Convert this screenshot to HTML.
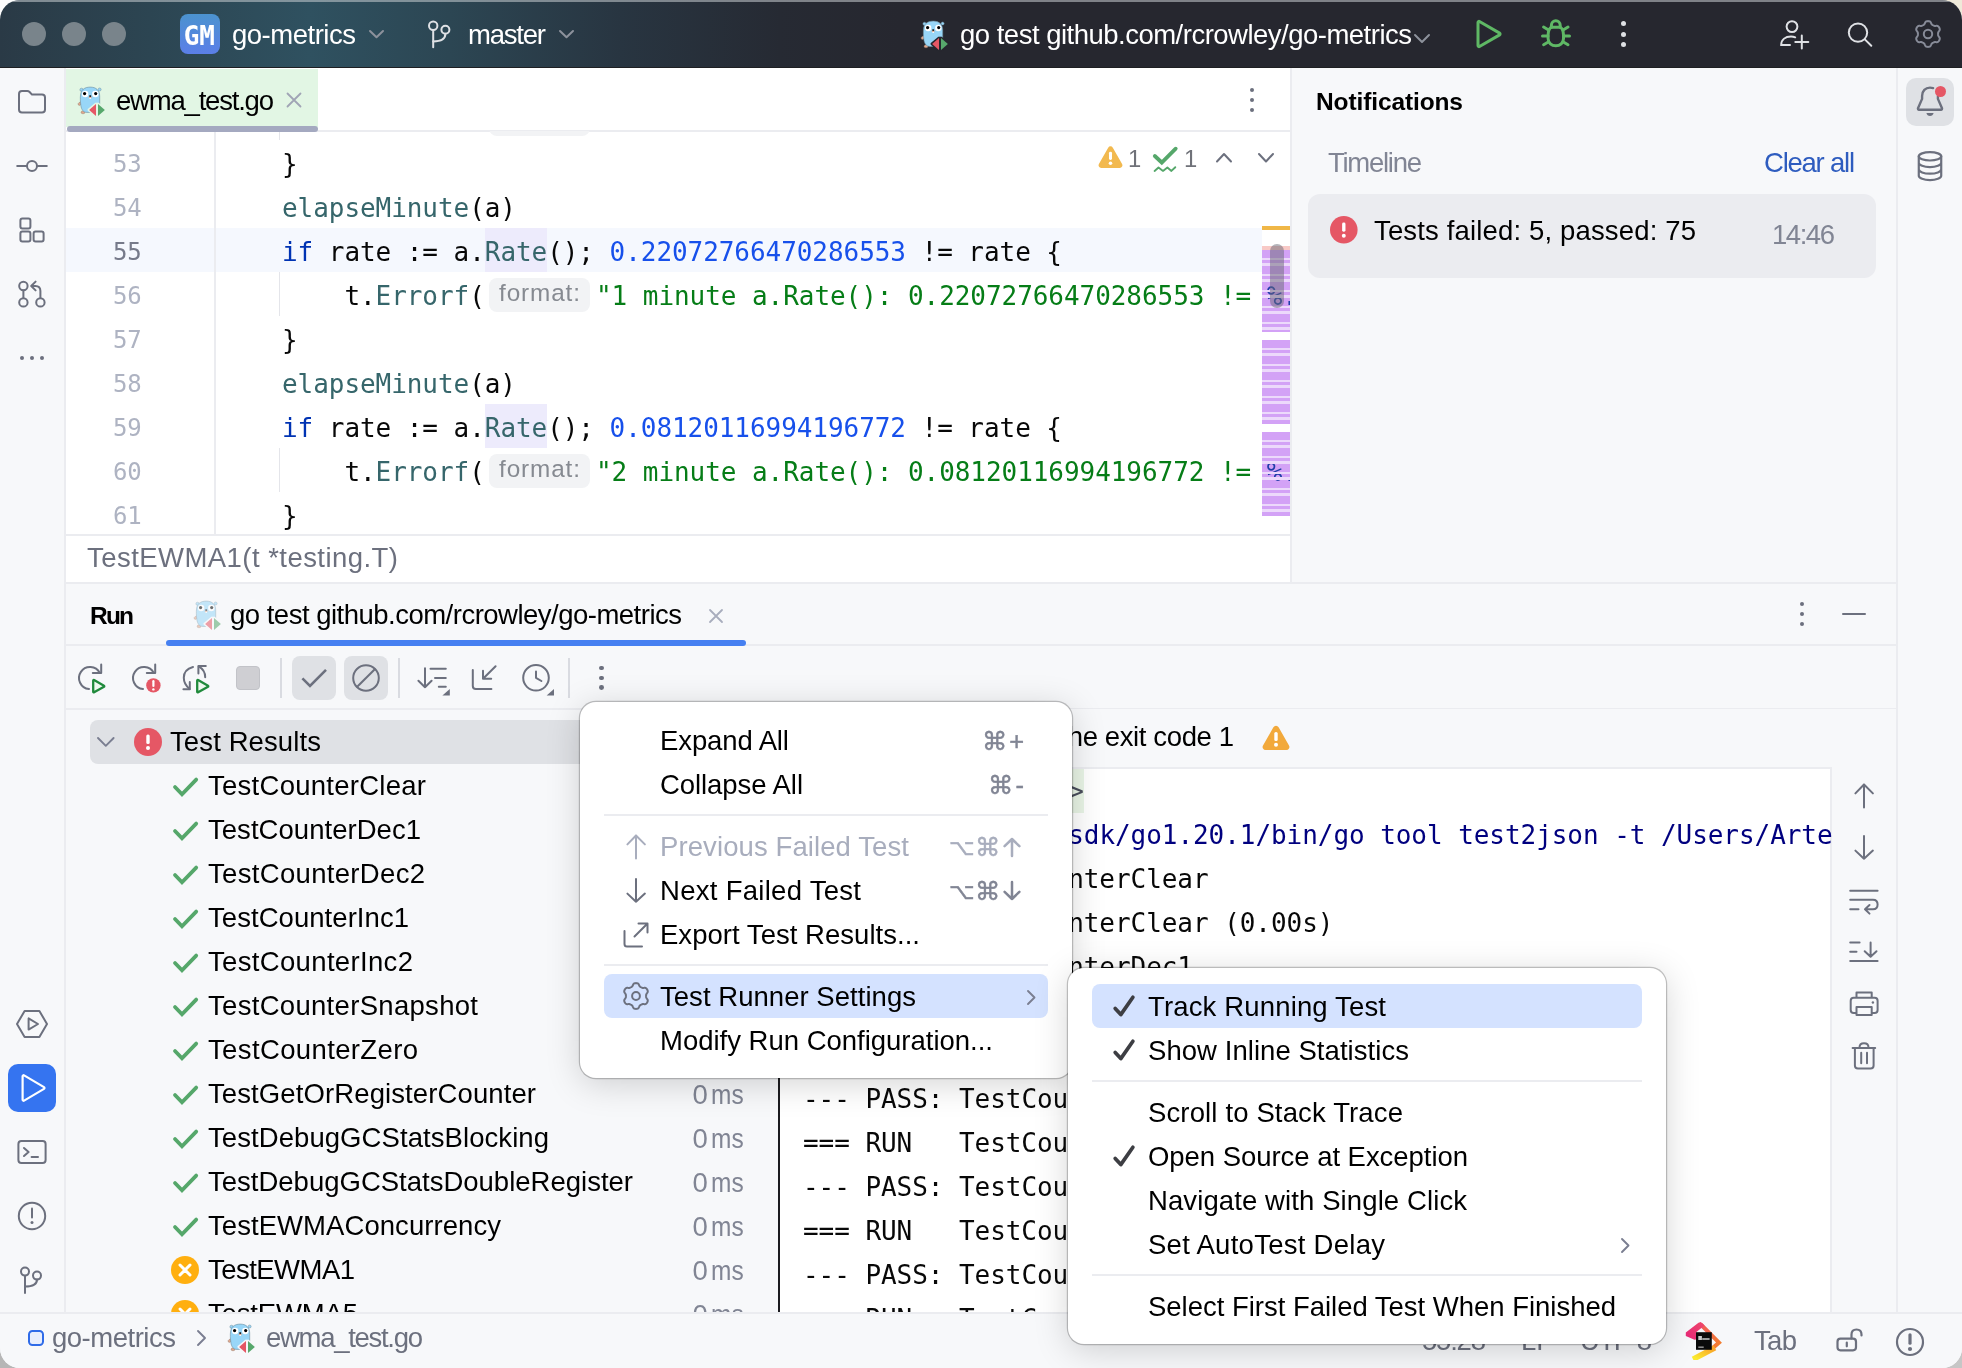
<!DOCTYPE html>
<html lang="en"><head><meta charset="utf-8"><title>go-metrics – ewma_test.go</title>
<style>
html,body{margin:0;padding:0;}
body{width:1962px;height:1368px;overflow:hidden;background:#f2f2f2;position:relative;}
#win{will-change:transform;position:absolute;left:0;top:0;width:1962px;height:1368px;border-radius:20px;overflow:hidden;background:#f7f8fa;}
.b{position:absolute;display:block;}
.t{position:absolute;white-space:pre;display:block;}
.s{font-family:"Liberation Sans","DejaVu Sans",sans-serif;}
.m{font-family:"DejaVu Sans Mono","Liberation Mono",monospace;}

</style></head>
<body>
<div class="b" style="left:0;top:0;width:30px;height:30px;background:#fdfdfd"></div>
<div class="b" style="right:0;top:0;width:30px;height:30px;background:#efe9d9"></div>
<div class="b" style="left:0;bottom:0;width:30px;height:30px;background:#b6b6b6"></div>
<div class="b" style="right:0;bottom:0;width:30px;height:30px;background:#c6c6c6"></div>
<div id="win">
<div class="b" style="left:0px;top:0px;width:1962px;height:67px;background:linear-gradient(90deg,#2a3a46 0px,#2c4552 150px,#2f5160 310px,#2c4653 450px,#283541 620px,#262a33 780px,#26272f 900px,#26272f 1962px);"></div>
<div class="b" style="left:0px;top:67px;width:1962px;height:1px;background:#1e1f22;"></div>
<div class="b" style="left:0px;top:0px;width:1962px;height:1.5px;background:rgba(200,205,210,.55);"></div>
<div class="b" style="left:22px;top:22px;width:24px;height:24px;background:#79848b;border-radius:50%;"></div>
<div class="b" style="left:62px;top:22px;width:24px;height:24px;background:#79848b;border-radius:50%;"></div>
<div class="b" style="left:102px;top:22px;width:24px;height:24px;background:#79848b;border-radius:50%;"></div>
<div class="b" style="left:180px;top:14px;width:40px;height:40px;background:linear-gradient(180deg,#4b93cf,#5b7fe8);border-radius:8px;"></div>
<span class="t m" style="left:183.7px;top:15.5px;height:40px;line-height:40px;font-size:26px;color:#fff;font-weight:700;">GM</span>
<span class="t s" style="left:232px;top:12.5px;height:44px;line-height:44px;font-size:27.5px;color:#fff;letter-spacing:-0.484px;">go-metrics</span>
<span class="t s" style="left:468px;top:12.5px;height:44px;line-height:44px;font-size:27.5px;color:#fff;letter-spacing:-1.209px;">master</span>
<span class="t s" style="left:960px;top:12.5px;height:44px;line-height:44px;font-size:27.5px;color:#fff;letter-spacing:-0.506px;">go test github.com/rcrowley/go-metrics</span>
<div class="b" style="left:0px;top:68px;width:64px;height:1246px;background:#f7f8fa;"></div>
<div class="b" style="left:64px;top:68px;width:2px;height:1246px;background:#ebecf0;"></div>
<div class="b" style="left:1898px;top:68px;width:64px;height:1246px;background:#f7f8fa;"></div>
<div class="b" style="left:1896px;top:68px;width:2px;height:1246px;background:#ebecf0;"></div>
<div class="b" style="left:1906px;top:78px;width:48px;height:48px;background:#dfe1e5;border-radius:10px;"></div>
<div class="b" style="left:66px;top:68px;width:1224px;height:62px;background:#fff;"></div>
<div class="b" style="left:66px;top:130px;width:1224px;height:2px;background:#ebecf0;"></div>
<div class="b" style="left:66px;top:69px;width:252px;height:58px;background:#e2f6e4;"></div>
<span class="t s" style="left:116px;top:78.5px;height:44px;line-height:44px;font-size:27.5px;color:#000;letter-spacing:-1.202px;">ewma_test.go</span>
<div class="b" style="left:66px;top:132px;width:1224px;height:402px;background:#fff;"></div>
<div class="b" style="left:67px;top:126px;width:251px;height:5.5px;background:#a4a9c0;border-radius:3px;"></div>
<div class="b" style="left:66px;top:228px;width:1196px;height:44px;background:#f5f8fe;"></div>
<div class="b" style="left:214px;top:132px;width:1.5px;height:402px;background:#ebecf0;"></div>
<div class="b" style="left:278.5px;top:272px;width:1.3px;height:44px;background:#e4e5ea;"></div>
<div class="b" style="left:278.5px;top:132px;width:1.3px;height:8px;background:#e4e5ea;"></div>
<div class="b" style="left:278.5px;top:448px;width:1.3px;height:44px;background:#e4e5ea;"></div>
<div class="b" style="left:489px;top:116px;width:101px;height:20px;background:#f2f3f5;border-radius:8px;clip-path:inset(15px 0 0 0);"></div>
<div class="b" style="left:485px;top:228px;width:62px;height:44px;background:#edebfc;"></div>
<div class="b" style="left:485px;top:404px;width:62px;height:44px;background:#edebfc;"></div>
<span class="t m" style="left:113px;top:141.5px;height:44px;line-height:44px;font-size:24px;color:#aeb3c2;letter-spacing:-0.106px;">53</span>
<span class="t m" style="left:113px;top:185.5px;height:44px;line-height:44px;font-size:24px;color:#aeb3c2;letter-spacing:-0.106px;">54</span>
<span class="t m" style="left:113px;top:229.5px;height:44px;line-height:44px;font-size:24px;color:#767a8a;letter-spacing:-0.106px;">55</span>
<span class="t m" style="left:113px;top:273.5px;height:44px;line-height:44px;font-size:24px;color:#aeb3c2;letter-spacing:-0.106px;">56</span>
<span class="t m" style="left:113px;top:317.5px;height:44px;line-height:44px;font-size:24px;color:#aeb3c2;letter-spacing:-0.106px;">57</span>
<span class="t m" style="left:113px;top:361.5px;height:44px;line-height:44px;font-size:24px;color:#aeb3c2;letter-spacing:-0.106px;">58</span>
<span class="t m" style="left:113px;top:405.5px;height:44px;line-height:44px;font-size:24px;color:#aeb3c2;letter-spacing:-0.106px;">59</span>
<span class="t m" style="left:113px;top:449.5px;height:44px;line-height:44px;font-size:24px;color:#aeb3c2;letter-spacing:-0.106px;">60</span>
<span class="t m" style="left:113px;top:493.5px;height:44px;line-height:44px;font-size:24px;color:#aeb3c2;letter-spacing:-0.106px;">61</span>
<span class="t m" style="left:282px;top:142px;height:44px;line-height:44px;font-size:26px;color:#080808;">}</span>
<span class="t m" style="left:282px;top:186px;height:44px;line-height:44px;font-size:26px;color:#36666b;letter-spacing:-0.059px;">elapseMinute</span>
<span class="t m" style="left:469.2px;top:186px;height:44px;line-height:44px;font-size:26px;color:#080808;letter-spacing:-0.084px;">(a)</span>
<span class="t m" style="left:282px;top:230px;height:44px;line-height:44px;font-size:26px;color:#0033b3;letter-spacing:-0.113px;">if</span>
<span class="t m" style="left:313.2px;top:230px;height:44px;line-height:44px;font-size:26px;color:#080808;letter-spacing:-0.059px;"> rate := a.</span>
<span class="t m" style="left:484.79999999999995px;top:230px;height:44px;line-height:44px;font-size:26px;color:#36666b;letter-spacing:-0.075px;">Rate</span>
<span class="t m" style="left:547.1999999999999px;top:230px;height:44px;line-height:44px;font-size:26px;color:#080808;letter-spacing:-0.075px;">(); </span>
<span class="t m" style="left:609.5999999999999px;top:230px;height:44px;line-height:44px;font-size:26px;color:#1750eb;letter-spacing:-0.057px;">0.22072766470286553</span>
<span class="t m" style="left:905.9999999999999px;top:230px;height:44px;line-height:44px;font-size:26px;color:#080808;letter-spacing:-0.061px;"> != rate {</span>
<span class="t m" style="left:344.4px;top:274px;height:44px;line-height:44px;font-size:26px;color:#080808;letter-spacing:-0.113px;">t.</span>
<span class="t m" style="left:375.59999999999997px;top:274px;height:44px;line-height:44px;font-size:26px;color:#36666b;letter-spacing:-0.064px;">Errorf</span>
<span class="t m" style="left:469.19999999999993px;top:274px;height:44px;line-height:44px;font-size:26px;color:#080808;">(</span>
<span class="t m" style="left:282px;top:318px;height:44px;line-height:44px;font-size:26px;color:#080808;">}</span>
<span class="t m" style="left:282px;top:362px;height:44px;line-height:44px;font-size:26px;color:#36666b;letter-spacing:-0.059px;">elapseMinute</span>
<span class="t m" style="left:469.2px;top:362px;height:44px;line-height:44px;font-size:26px;color:#080808;letter-spacing:-0.084px;">(a)</span>
<span class="t m" style="left:282px;top:406px;height:44px;line-height:44px;font-size:26px;color:#0033b3;letter-spacing:-0.113px;">if</span>
<span class="t m" style="left:313.2px;top:406px;height:44px;line-height:44px;font-size:26px;color:#080808;letter-spacing:-0.059px;"> rate := a.</span>
<span class="t m" style="left:484.79999999999995px;top:406px;height:44px;line-height:44px;font-size:26px;color:#36666b;letter-spacing:-0.075px;">Rate</span>
<span class="t m" style="left:547.1999999999999px;top:406px;height:44px;line-height:44px;font-size:26px;color:#080808;letter-spacing:-0.075px;">(); </span>
<span class="t m" style="left:609.5999999999999px;top:406px;height:44px;line-height:44px;font-size:26px;color:#1750eb;letter-spacing:-0.057px;">0.08120116994196772</span>
<span class="t m" style="left:905.9999999999999px;top:406px;height:44px;line-height:44px;font-size:26px;color:#080808;letter-spacing:-0.061px;"> != rate {</span>
<span class="t m" style="left:344.4px;top:450px;height:44px;line-height:44px;font-size:26px;color:#080808;letter-spacing:-0.113px;">t.</span>
<span class="t m" style="left:375.59999999999997px;top:450px;height:44px;line-height:44px;font-size:26px;color:#36666b;letter-spacing:-0.064px;">Errorf</span>
<span class="t m" style="left:469.19999999999993px;top:450px;height:44px;line-height:44px;font-size:26px;color:#080808;">(</span>
<span class="t m" style="left:282px;top:494px;height:44px;line-height:44px;font-size:26px;color:#080808;">}</span>
<div class="b" style="left:1262px;top:132px;width:28px;height:402px;background:#fff;"></div>
<div class="b" style="left:1262px;top:226px;width:28px;height:4px;background:#f0b747;"></div>
<div class="b" style="left:1262px;top:246px;width:28px;height:4px;background:#f8c9c6;"></div>
<div class="b" style="left:1262px;top:250px;width:28px;height:82px;background:#d3a2f6;"></div>
<div class="b" style="left:1262px;top:340px;width:28px;height:84px;background:#d3a2f6;"></div>
<div class="b" style="left:1262px;top:432px;width:28px;height:84px;background:#d3a2f6;"></div>
<div class="b" style="left:489px;top:278px;width:101px;height:34px;background:#f2f3f5;border-radius:8px;"></div>
<span class="t s" style="left:499px;top:275.5px;height:34px;line-height:34px;font-size:24.3px;color:#868a91;letter-spacing:0.898px;">format:</span>
<span class="t m" style="left:596px;top:274px;height:44px;line-height:44px;font-size:26px;color:#067d17;letter-spacing:-0.055px;">&quot;1 minute a.Rate(): 0.22072766470286553 != </span>
<div class="b" style="left:1262px;top:272px;width:28px;height:44px;overflow:hidden"><span class="t m" style="left:4.7999999999999545px;top:2px;height:44px;line-height:44px;font-size:26px;color:#1f3ea8;letter-spacing:-0.113px;">%.</span></div>
<div class="b" style="left:489px;top:454px;width:101px;height:34px;background:#f2f3f5;border-radius:8px;"></div>
<span class="t s" style="left:499px;top:451.5px;height:34px;line-height:34px;font-size:24.3px;color:#868a91;letter-spacing:0.898px;">format:</span>
<span class="t m" style="left:596px;top:450px;height:44px;line-height:44px;font-size:26px;color:#067d17;letter-spacing:-0.055px;">&quot;2 minute a.Rate(): 0.08120116994196772 != </span>
<div class="b" style="left:1262px;top:448px;width:28px;height:44px;overflow:hidden"><span class="t m" style="left:4.7999999999999545px;top:2px;height:44px;line-height:44px;font-size:26px;color:#1f3ea8;letter-spacing:-0.113px;">%.</span></div>
<div class="b" style="left:1262px;top:250px;width:28px;height:82px;background:repeating-linear-gradient(180deg,transparent 0px,transparent 8px,#ecd9fb 8px,#ecd9fb 10px,transparent 10px,transparent 13.5px,#ecd9fb 13.5px,#ecd9fb 16px);"></div>
<div class="b" style="left:1262px;top:340px;width:28px;height:84px;background:repeating-linear-gradient(180deg,transparent 0px,transparent 8px,#ecd9fb 8px,#ecd9fb 10px,transparent 10px,transparent 13.5px,#ecd9fb 13.5px,#ecd9fb 16px);"></div>
<div class="b" style="left:1262px;top:432px;width:28px;height:84px;background:repeating-linear-gradient(180deg,transparent 0px,transparent 8px,#ecd9fb 8px,#ecd9fb 10px,transparent 10px,transparent 13.5px,#ecd9fb 13.5px,#ecd9fb 16px);"></div>
<div class="b" style="left:1270px;top:244px;width:14px;height:64px;background:rgba(105,105,118,.5);border-radius:7px;"></div>
<span class="t s" style="left:1128px;top:136.5px;height:44px;line-height:44px;font-size:23.8px;color:#707279;">1</span>
<span class="t s" style="left:1184px;top:136.5px;height:44px;line-height:44px;font-size:23.8px;color:#707279;">1</span>
<div class="b" style="left:66px;top:534px;width:1224px;height:2px;background:#ebecf0;"></div>
<div class="b" style="left:66px;top:536px;width:1224px;height:46px;background:#fff;"></div>
<span class="t s" style="left:87px;top:535.5px;height:44px;line-height:44px;font-size:27.5px;color:#6c707e;letter-spacing:0.452px;">TestEWMA1(t *testing.T)</span>
<div class="b" style="left:1290px;top:68px;width:2px;height:514px;background:#ebecf0;"></div>
<div class="b" style="left:1292px;top:68px;width:604px;height:514px;background:#f7f8fa;"></div>
<span class="t s" style="left:1316px;top:79.5px;height:44px;line-height:44px;font-size:24.5px;color:#000;font-weight:700;letter-spacing:-0.115px;">Notifications</span>
<span class="t s" style="left:1328px;top:140.5px;height:44px;line-height:44px;font-size:27.5px;color:#818594;letter-spacing:-1.272px;">Timeline</span>
<span class="t s" style="left:1764px;top:140.5px;height:44px;line-height:44px;font-size:27.5px;color:#2e5cbf;letter-spacing:-1.234px;">Clear all</span>
<div class="b" style="left:1308px;top:194px;width:568px;height:84px;background:#ebecf0;border-radius:12px;"></div>
<span class="t s" style="left:1374px;top:208.5px;height:44px;line-height:44px;font-size:27.5px;color:#000;letter-spacing:0.155px;">Tests failed: 5, passed: 75</span>
<span class="t s" style="left:1772px;top:212.5px;height:44px;line-height:44px;font-size:27.5px;color:#818594;letter-spacing:-1.457px;">14:46</span>
<div class="b" style="left:66px;top:582px;width:1830px;height:2px;background:#ebecf0;"></div>
<div class="b" style="left:66px;top:584px;width:1830px;height:730px;background:#f7f8fa;"></div>
<span class="t s" style="left:90px;top:594px;height:44px;line-height:44px;font-size:24.5px;color:#000;font-weight:700;letter-spacing:-1.812px;">Run</span>
<span class="t s" style="left:230px;top:592.5px;height:44px;line-height:44px;font-size:27.5px;color:#000;letter-spacing:-0.506px;">go test github.com/rcrowley/go-metrics</span>
<div class="b" style="left:66px;top:644px;width:1830px;height:2px;background:#ebecf0;"></div>
<div class="b" style="left:166px;top:640px;width:580px;height:6px;background:#4680f1;border-radius:3px;"></div>
<div class="b" style="left:66px;top:708px;width:1830px;height:2px;background:#ebecf0;"></div>
<div class="b" style="left:280px;top:658px;width:2px;height:40px;background:#d9dbe1;"></div>
<div class="b" style="left:398px;top:658px;width:2px;height:40px;background:#d9dbe1;"></div>
<div class="b" style="left:568px;top:658px;width:2px;height:40px;background:#d9dbe1;"></div>
<div class="b" style="left:292px;top:656px;width:44px;height:44px;background:#dfe1e5;border-radius:8px;"></div>
<div class="b" style="left:344px;top:656px;width:44px;height:44px;background:#dfe1e5;border-radius:8px;"></div>
<div class="b" style="left:236px;top:666px;width:24px;height:24px;background:#cfcfd3;border-radius:4px;border:1px solid #c2c3c8;box-sizing:border-box;"></div>
<div class="b" style="left:90px;top:720px;width:690px;height:44px;background:#dfe1e5;border-radius:8px;"></div>
<span class="t s" style="left:170px;top:719.5px;height:44px;line-height:44px;font-size:27.5px;color:#000;letter-spacing:0.111px;">Test Results</span>
<span class="t s" style="left:208px;top:763.5px;height:44px;line-height:44px;font-size:27.5px;color:#000;letter-spacing:0.268px;">TestCounterClear</span>
<span class="t s" style="left:692.5px;top:765px;height:44px;line-height:44px;font-size:27.5px;color:#818594;">0</span>
<span class="t s" style="left:711px;top:765px;height:44px;line-height:44px;font-size:27.5px;color:#818594;transform:scaleX(.89);transform-origin:0 50%;">ms</span>
<span class="t s" style="left:208px;top:807.5px;height:44px;line-height:44px;font-size:27.5px;color:#000;letter-spacing:0.038px;">TestCounterDec1</span>
<span class="t s" style="left:692.5px;top:809px;height:44px;line-height:44px;font-size:27.5px;color:#818594;">0</span>
<span class="t s" style="left:711px;top:809px;height:44px;line-height:44px;font-size:27.5px;color:#818594;transform:scaleX(.89);transform-origin:0 50%;">ms</span>
<span class="t s" style="left:208px;top:851.5px;height:44px;line-height:44px;font-size:27.5px;color:#000;letter-spacing:0.324px;">TestCounterDec2</span>
<span class="t s" style="left:692.5px;top:853px;height:44px;line-height:44px;font-size:27.5px;color:#818594;">0</span>
<span class="t s" style="left:711px;top:853px;height:44px;line-height:44px;font-size:27.5px;color:#818594;transform:scaleX(.89);transform-origin:0 50%;">ms</span>
<span class="t s" style="left:208px;top:895.5px;height:44px;line-height:44px;font-size:27.5px;color:#000;letter-spacing:0.054px;">TestCounterInc1</span>
<span class="t s" style="left:692.5px;top:897px;height:44px;line-height:44px;font-size:27.5px;color:#818594;">0</span>
<span class="t s" style="left:711px;top:897px;height:44px;line-height:44px;font-size:27.5px;color:#818594;transform:scaleX(.89);transform-origin:0 50%;">ms</span>
<span class="t s" style="left:208px;top:939.5px;height:44px;line-height:44px;font-size:27.5px;color:#000;letter-spacing:0.339px;">TestCounterInc2</span>
<span class="t s" style="left:692.5px;top:941px;height:44px;line-height:44px;font-size:27.5px;color:#818594;">0</span>
<span class="t s" style="left:711px;top:941px;height:44px;line-height:44px;font-size:27.5px;color:#818594;transform:scaleX(.89);transform-origin:0 50%;">ms</span>
<span class="t s" style="left:208px;top:983.5px;height:44px;line-height:44px;font-size:27.5px;color:#000;letter-spacing:0.306px;">TestCounterSnapshot</span>
<span class="t s" style="left:692.5px;top:985px;height:44px;line-height:44px;font-size:27.5px;color:#818594;">0</span>
<span class="t s" style="left:711px;top:985px;height:44px;line-height:44px;font-size:27.5px;color:#818594;transform:scaleX(.89);transform-origin:0 50%;">ms</span>
<span class="t s" style="left:208px;top:1027.5px;height:44px;line-height:44px;font-size:27.5px;color:#000;letter-spacing:0.369px;">TestCounterZero</span>
<span class="t s" style="left:692.5px;top:1029px;height:44px;line-height:44px;font-size:27.5px;color:#818594;">0</span>
<span class="t s" style="left:711px;top:1029px;height:44px;line-height:44px;font-size:27.5px;color:#818594;transform:scaleX(.89);transform-origin:0 50%;">ms</span>
<span class="t s" style="left:208px;top:1071.5px;height:44px;line-height:44px;font-size:27.5px;color:#000;letter-spacing:0.107px;">TestGetOrRegisterCounter</span>
<span class="t s" style="left:692.5px;top:1073px;height:44px;line-height:44px;font-size:27.5px;color:#818594;">0</span>
<span class="t s" style="left:711px;top:1073px;height:44px;line-height:44px;font-size:27.5px;color:#818594;transform:scaleX(.89);transform-origin:0 50%;">ms</span>
<span class="t s" style="left:208px;top:1115.5px;height:44px;line-height:44px;font-size:27.5px;color:#000;letter-spacing:0.072px;">TestDebugGCStatsBlocking</span>
<span class="t s" style="left:692.5px;top:1117px;height:44px;line-height:44px;font-size:27.5px;color:#818594;">0</span>
<span class="t s" style="left:711px;top:1117px;height:44px;line-height:44px;font-size:27.5px;color:#818594;transform:scaleX(.89);transform-origin:0 50%;">ms</span>
<span class="t s" style="left:208px;top:1159.5px;height:44px;line-height:44px;font-size:27.5px;color:#000;letter-spacing:0.002px;">TestDebugGCStatsDoubleRegister</span>
<span class="t s" style="left:692.5px;top:1161px;height:44px;line-height:44px;font-size:27.5px;color:#818594;">0</span>
<span class="t s" style="left:711px;top:1161px;height:44px;line-height:44px;font-size:27.5px;color:#818594;transform:scaleX(.89);transform-origin:0 50%;">ms</span>
<span class="t s" style="left:208px;top:1203.5px;height:44px;line-height:44px;font-size:27.5px;color:#000;letter-spacing:0.062px;">TestEWMAConcurrency</span>
<span class="t s" style="left:692.5px;top:1205px;height:44px;line-height:44px;font-size:27.5px;color:#818594;">0</span>
<span class="t s" style="left:711px;top:1205px;height:44px;line-height:44px;font-size:27.5px;color:#818594;transform:scaleX(.89);transform-origin:0 50%;">ms</span>
<span class="t s" style="left:208px;top:1247.5px;height:44px;line-height:44px;font-size:27.5px;color:#000;letter-spacing:-0.535px;">TestEWMA1</span>
<span class="t s" style="left:692.5px;top:1249px;height:44px;line-height:44px;font-size:27.5px;color:#818594;">0</span>
<span class="t s" style="left:711px;top:1249px;height:44px;line-height:44px;font-size:27.5px;color:#818594;transform:scaleX(.89);transform-origin:0 50%;">ms</span>
<span class="t s" style="left:208px;top:1291.5px;height:44px;line-height:44px;font-size:27.5px;color:#000;letter-spacing:-0.160px;">TestEWMA5</span>
<span class="t s" style="left:692.5px;top:1293px;height:44px;line-height:44px;font-size:27.5px;color:#818594;">0</span>
<span class="t s" style="left:711px;top:1293px;height:44px;line-height:44px;font-size:27.5px;color:#818594;transform:scaleX(.89);transform-origin:0 50%;">ms</span>
<div class="b" style="left:778px;top:709px;width:2px;height:605px;background:#1b1b1f;"></div>
<div class="b" style="left:780px;top:709px;width:1116px;height:59px;background:#f7f8fa;"></div>
<div class="b" style="left:780px;top:767px;width:1050px;height:2px;background:#ebecf0;"></div>
<div class="b" style="left:780px;top:769px;width:1050px;height:545px;background:#fff;"></div>
<div class="b" style="left:1830px;top:767px;width:2px;height:547px;background:#ebecf0;"></div>
<span class="t s" style="left:803px;top:714.5px;height:44px;line-height:44px;font-size:27.5px;color:#000;letter-spacing:-0.384px;">Process finished with the exit code 1</span>
<div class="b" style="left:803px;top:769px;width:280.8px;height:44px;background:#e9f5e6;"></div>
<span class="t m" style="left:803px;top:769px;height:44px;line-height:44px;font-size:26px;color:#4a4e5c;letter-spacing:-0.057px;">&lt;4 go setup calls&gt;</span>
<span class="t m" style="left:803px;top:813px;height:44px;line-height:44px;font-size:26px;color:#00007f;letter-spacing:-0.054px;">/Users/artemk/go/sdk/go1.20.1/bin/go tool test2json -t /Users/Arte</span>
<span class="t m" style="left:803px;top:857px;height:44px;line-height:44px;font-size:26px;color:#080808;letter-spacing:-0.056px;">=== RUN   TestCounterClear</span>
<span class="t m" style="left:803px;top:901px;height:44px;line-height:44px;font-size:26px;color:#080808;letter-spacing:-0.055px;">--- PASS: TestCounterClear (0.00s)</span>
<span class="t m" style="left:803px;top:945px;height:44px;line-height:44px;font-size:26px;color:#080808;letter-spacing:-0.056px;">=== RUN   TestCounterDec1</span>
<span class="t m" style="left:803px;top:989px;height:44px;line-height:44px;font-size:26px;color:#080808;letter-spacing:-0.055px;">--- PASS: TestCounterDec1 (0.00s)</span>
<span class="t m" style="left:803px;top:1033px;height:44px;line-height:44px;font-size:26px;color:#080808;letter-spacing:-0.056px;">=== RUN   TestCounterDec2</span>
<span class="t m" style="left:803px;top:1077px;height:44px;line-height:44px;font-size:26px;color:#080808;letter-spacing:-0.055px;">--- PASS: TestCounterDec2 (0.00s)</span>
<span class="t m" style="left:803px;top:1121px;height:44px;line-height:44px;font-size:26px;color:#080808;letter-spacing:-0.056px;">=== RUN   TestCounterInc1</span>
<span class="t m" style="left:803px;top:1165px;height:44px;line-height:44px;font-size:26px;color:#080808;letter-spacing:-0.055px;">--- PASS: TestCounterInc1 (0.00s)</span>
<span class="t m" style="left:803px;top:1209px;height:44px;line-height:44px;font-size:26px;color:#080808;letter-spacing:-0.056px;">=== RUN   TestCounterInc2</span>
<span class="t m" style="left:803px;top:1253px;height:44px;line-height:44px;font-size:26px;color:#080808;letter-spacing:-0.055px;">--- PASS: TestCounterInc2 (0.00s)</span>
<span class="t m" style="left:803px;top:1297px;height:44px;line-height:44px;font-size:26px;color:#080808;letter-spacing:-0.055px;">=== RUN   TestCounterSnapshot</span>
<div class="b" style="left:1832px;top:710px;width:64px;height:604px;background:#f7f8fa;"></div>
<svg class="b" style="left:367.6px;top:29.05px" width="17" height="10.3" fill="none" stroke-linecap="round" stroke-linejoin="round"><path d="M2 2L8.5 8.3L15 2" stroke="#8d929c" stroke-width="2"/></svg>
<svg class="b" style="left:557.8px;top:29.05px" width="17" height="10.3" fill="none" stroke-linecap="round" stroke-linejoin="round"><path d="M2 2L8.5 8.3L15 2" stroke="#8d929c" stroke-width="2"/></svg>
<svg class="b" style="left:1413px;top:32.5px" width="18" height="11" fill="none" stroke-linecap="round" stroke-linejoin="round"><path d="M2 2L9 9L16 2" stroke="#8d929c" stroke-width="2"/></svg>
<svg class="b" style="left:420px;top:16px;" width="40" height="40" viewBox="0 0 20 20" fill="none" stroke-linecap="round" stroke-linejoin="round"><circle cx="6.6" cy="4.9" r="2.1" stroke="#dfe1e5" stroke-width="1" fill="none"/><circle cx="12.7" cy="6.9" r="2.0" stroke="#dfe1e5" stroke-width="1" fill="none"/><path d="M6.6 7V15.6" stroke="#dfe1e5" stroke-width="1" fill="none" /><path d="M12.7 8.9C12.7 11.6 10 12.7 6.6 12.7" stroke="#dfe1e5" stroke-width="1" fill="none" /></svg>
<svg class="b" style="left:919px;top:18px;" width="34" height="34" viewBox="0 0 34 34" fill="none"><circle cx="5.5" cy="5.8" r="1.6" fill="#98d6f8" stroke="#6f8d9c" stroke-width=".5"/><circle cx="23.6" cy="5.5" r="1.5" fill="#98d6f8" stroke="#6f8d9c" stroke-width=".5"/><ellipse cx="3.9" cy="19.7" rx="2" ry="1.4" transform="rotate(-35 3.9 19.7)" fill="#e0a88e" stroke="#8a7466" stroke-width=".4"/><ellipse cx="7" cy="28.3" rx="1.9" ry="1.5" fill="#e0a88e" stroke="#8a7466" stroke-width=".4"/><path d="M14.3 3.1C20 3.1 23.7 6.4 23.7 12V24.5C23.7 27 21.5 28.4 17.5 28.4H11C7.4 28.4 5.4 25.8 4.8 21.2C4.3 17 4.2 14 4.5 11C5 6 8.3 3.1 14.3 3.1Z" fill="#98d6f8" stroke="#6f8d9c" stroke-width=".6"/><circle cx="9.2" cy="10" r="3.2" fill="#fff"/><circle cx="19.3" cy="10" r="3.2" fill="#fff"/><circle cx="8.6" cy="9.6" r="1.6" fill="#000"/><circle cx="19.7" cy="9.6" r="1.6" fill="#000"/><ellipse cx="14.2" cy="13.2" rx="1.5" ry="1" fill="#e0a88e"/><rect x="13.5" y="13.8" width="1.4" height="1.2" fill="#fff"/><ellipse cx="14.2" cy="12.1" rx="1.1" ry=".8" fill="#000"/><path d="M13.1 25.9L20 20.1V31.9ZM22 20.1V31.9L28.9 25.9Z" fill="#26272f" stroke="#26272f" stroke-width="3.2" stroke-linejoin="round"/><path d="M13.1 25.9L20 20.1V31.9Z" fill="#e55765"/><path d="M22 20.1V31.9L28.9 25.9Z" fill="#57a86c"/></svg>
<svg class="b" style="left:1470px;top:14px;" width="40" height="40" viewBox="0 0 40 40" fill="none"><path d="M8 8.4V31.6a1 1 0 0 0 1.5.87L29.6 20.87a1 1 0 0 0 0-1.74L9.5 7.53a1 1 0 0 0-1.5.87Z" stroke="#5fb865" stroke-width="3" stroke-linejoin="round"/></svg>
<svg class="b" style="left:1536px;top:14px;" width="40" height="40" viewBox="0 0 40 40" fill="none"><g stroke="#5fb865" stroke-width="3" stroke-linecap="round" stroke-linejoin="round" fill="none"><path d="M12.1 21C12.1 16 14 13.2 16 13.2H23.6C25.6 13.2 27.5 16 27.5 21V24.5C27.5 29 24 31.8 19.8 31.8S12.1 29 12.1 24.5Z"/><path d="M15.4 13.2V11.2A4.4 4.4 0 0 1 24.2 11.2V13.2"/><path d="M6.5 21.9H12M27.6 21.9H33.5M7.6 13L12.5 16M32 13L27.1 16M7.6 30.8L12.7 27.8M32 30.8L26.9 27.8"/></g></svg>
<div class="b" style="left:1621.4px;top:20.9px;width:5px;height:5px;background:#dfe1e5;border-radius:50%;"></div>
<div class="b" style="left:1621.4px;top:31.6px;width:5px;height:5px;background:#dfe1e5;border-radius:50%;"></div>
<div class="b" style="left:1621.4px;top:42.3px;width:5px;height:5px;background:#dfe1e5;border-radius:50%;"></div>
<svg class="b" style="left:1772px;top:14px;" width="40" height="40" viewBox="0 0 40 40" fill="none"><g stroke="#dfe1e5" stroke-width="2" stroke-linecap="round" fill="none"><circle cx="20" cy="12.6" r="5.4"/><path d="M18 31H9.2C9.2 25.5 13.5 22.5 19 22.5C20.5 22.5 22 22.8 23.2 23.3"/><path d="M29.8 21.5V34.5M23.3 28H36.3"/></g></svg>
<svg class="b" style="left:1839px;top:14px;" width="40" height="40" viewBox="0 0 40 40" fill="none"><g stroke="#dfe1e5" stroke-width="2" stroke-linecap="round" fill="none"><circle cx="19" cy="18.6" r="9.2"/><path d="M25.8 25.4L32.3 31.8"/></g></svg>
<svg class="b" style="left:1908.0px;top:13.799999999999997px;" width="40" height="40" viewBox="0 0 40 40" fill="none"><path d="M30.10 20.00 L30.10 20.44 L30.12 20.89 L30.18 21.34 L30.33 21.82 L30.65 22.36 L31.11 22.98 L31.54 23.64 L31.75 24.28 L31.76 24.87 L31.64 25.43 L31.43 25.95 L31.17 26.45 L30.87 26.92 L30.52 27.36 L30.10 27.75 L29.58 28.04 L28.92 28.17 L28.13 28.13 L27.37 28.04 L26.74 28.04 L26.25 28.15 L25.83 28.32 L25.43 28.53 L25.05 28.75 L24.67 28.97 L24.29 29.21 L23.93 29.49 L23.59 29.86 L23.28 30.40 L22.98 31.11 L22.62 31.81 L22.17 32.32 L21.66 32.62 L21.12 32.79 L20.56 32.87 L20.00 32.90 L19.44 32.87 L18.88 32.79 L18.34 32.62 L17.83 32.32 L17.38 31.81 L17.02 31.11 L16.72 30.40 L16.41 29.86 L16.07 29.49 L15.71 29.21 L15.33 28.97 L14.95 28.75 L14.57 28.53 L14.17 28.32 L13.75 28.15 L13.26 28.04 L12.63 28.04 L11.87 28.13 L11.08 28.17 L10.42 28.04 L9.90 27.75 L9.48 27.36 L9.13 26.92 L8.83 26.45 L8.57 25.95 L8.36 25.43 L8.24 24.87 L8.25 24.28 L8.46 23.64 L8.89 22.98 L9.35 22.36 L9.67 21.82 L9.82 21.34 L9.88 20.89 L9.90 20.44 L9.90 20.00 L9.90 19.56 L9.88 19.11 L9.82 18.66 L9.67 18.18 L9.35 17.64 L8.89 17.02 L8.46 16.36 L8.25 15.72 L8.24 15.13 L8.36 14.57 L8.57 14.05 L8.83 13.55 L9.13 13.08 L9.48 12.64 L9.90 12.25 L10.42 11.96 L11.08 11.83 L11.87 11.87 L12.63 11.96 L13.26 11.96 L13.75 11.85 L14.17 11.68 L14.57 11.47 L14.95 11.25 L15.33 11.03 L15.71 10.79 L16.07 10.51 L16.41 10.14 L16.72 9.60 L17.02 8.89 L17.38 8.19 L17.83 7.68 L18.34 7.38 L18.88 7.21 L19.44 7.13 L20.00 7.10 L20.56 7.13 L21.12 7.21 L21.66 7.38 L22.17 7.68 L22.62 8.19 L22.98 8.89 L23.28 9.60 L23.59 10.14 L23.93 10.51 L24.29 10.79 L24.67 11.03 L25.05 11.25 L25.43 11.47 L25.83 11.68 L26.25 11.85 L26.74 11.96 L27.37 11.96 L28.13 11.87 L28.92 11.83 L29.58 11.96 L30.10 12.25 L30.52 12.64 L30.87 13.08 L31.17 13.55 L31.43 14.05 L31.64 14.57 L31.76 15.13 L31.75 15.72 L31.54 16.36 L31.11 17.02 L30.65 17.64 L30.33 18.18 L30.18 18.66 L30.12 19.11 L30.10 19.56Z" stroke="#878b98" stroke-width="2" stroke-linejoin="round"/><circle cx="20.0" cy="20.0" r="4.2" stroke="#878b98" stroke-width="2"/></svg>
<svg class="b" style="left:12px;top:82px;" width="40" height="40" viewBox="0 0 20 20" fill="none" stroke-linecap="round" stroke-linejoin="round"><path d="M3.5 6C3.5 5.1 4.1 4.5 5 4.5H7.6C8.1 4.5 8.5 4.7 8.8 5L10 6.3H15C15.9 6.3 16.5 6.9 16.5 7.8V13.8C16.5 14.7 15.9 15.3 15 15.3H5C4.1 15.3 3.5 14.7 3.5 13.8Z" stroke="#6c707e" stroke-width="1" fill="none" /></svg>
<svg class="b" style="left:12px;top:146px;" width="40" height="40" viewBox="0 0 20 20" fill="none" stroke-linecap="round" stroke-linejoin="round"><circle cx="10" cy="10" r="2.5" stroke="#6c707e" stroke-width="1" fill="none"/><path d="M2.6 10H7.4M12.6 10H17.4" stroke="#6c707e" stroke-width="1" fill="none" /></svg>
<svg class="b" style="left:12px;top:210px;" width="40" height="40" viewBox="0 0 20 20" fill="none" stroke-linecap="round" stroke-linejoin="round"><rect x="4.2" y="4.2" width="5" height="5" rx="1" stroke="#6c707e"/><rect x="4.2" y="10.8" width="5" height="5" rx="1" stroke="#6c707e"/><rect x="10.8" y="10.8" width="5" height="5" rx="1" stroke="#6c707e"/></svg>
<svg class="b" style="left:12px;top:274px;" width="40" height="40" viewBox="0 0 20 20" fill="none" stroke-linecap="round" stroke-linejoin="round"><circle cx="5.7" cy="6" r="2.1" stroke="#6c707e" stroke-width="1" fill="none"/><circle cx="5.7" cy="14.2" r="2.1" stroke="#6c707e" stroke-width="1" fill="none"/><circle cx="14.2" cy="14.2" r="2.1" stroke="#6c707e" stroke-width="1" fill="none"/><path d="M5.7 8.2V12M14.2 12V8.5C14.2 7 13.2 6 11.7 6H10M11.8 3.8L9.6 6L11.8 8.2" stroke="#6c707e" stroke-width="1" fill="none" /></svg>
<div class="b" style="left:19.6px;top:356px;width:4px;height:4px;background:#6c707e;border-radius:50%;"></div>
<div class="b" style="left:29.8px;top:356px;width:4px;height:4px;background:#6c707e;border-radius:50%;"></div>
<div class="b" style="left:40px;top:356px;width:4px;height:4px;background:#6c707e;border-radius:50%;"></div>
<svg class="b" style="left:12px;top:1004px;" width="40" height="40" viewBox="0 0 20 20" fill="none" stroke-linecap="round" stroke-linejoin="round"><path d="M6.3 3.5H13.7L17.5 10L13.7 16.5H6.3L2.5 10Z" stroke="#6c707e" stroke-width="1" fill="none" /><path d="M8.3 7.2V12.8L13 10Z" stroke="#6c707e" stroke-width="1" fill="none" /></svg>
<div class="b" style="left:8px;top:1064px;width:48px;height:48px;background:#3574f0;border-radius:10px;"></div>
<svg class="b" style="left:12px;top:1068px;" width="40" height="40" viewBox="0 0 20 20" fill="none" stroke-linecap="round" stroke-linejoin="round"><path d="M5.3 4.1V15.9a.5.5 0 0 0 .75.43L16 10.43a.5.5 0 0 0 0-.86L6.05 3.67a.5.5 0 0 0-.75.43Z" stroke="#fff" stroke-width="1.1" fill="none" /></svg>
<svg class="b" style="left:12px;top:1132px;" width="40" height="40" viewBox="0 0 20 20" fill="none" stroke-linecap="round" stroke-linejoin="round"><rect x="3.2" y="4.5" width="13.6" height="11" rx="1.5" stroke="#6c707e"/><path d="M6 8L8.3 10L6 12M9.8 12.5H13" stroke="#6c707e" stroke-width="1" fill="none" /></svg>
<svg class="b" style="left:12px;top:1196px;" width="40" height="40" viewBox="0 0 20 20" fill="none" stroke-linecap="round" stroke-linejoin="round"><circle cx="10" cy="10" r="6.6" stroke="#6c707e" stroke-width="1" fill="none"/><path d="M10 6.3V10.8" stroke="#6c707e" stroke-width="1" fill="none" /><circle cx="10" cy="13.3" r="0.75" fill="#6c707e"/></svg>
<svg class="b" style="left:12px;top:1260px;" width="40" height="40" viewBox="0 0 20 20" fill="none" stroke-linecap="round" stroke-linejoin="round"><circle cx="6.5" cy="5.8" r="2" stroke="#6c707e" stroke-width="1" fill="none"/><circle cx="12.5" cy="7.8" r="2" stroke="#6c707e" stroke-width="1" fill="none"/><path d="M6.5 8V16.5M12.5 9.8C12.5 12.5 9.5 13.3 6.5 13.3" stroke="#6c707e" stroke-width="1" fill="none" /></svg>
<svg class="b" style="left:1906px;top:78px;" width="48" height="48" viewBox="0 0 20 20" fill="none" stroke-linecap="round" stroke-linejoin="round"><path d="M5.4 13.2H14.6C14.9 13.2 15.1 12.9 15 12.6L13.3 8.7V7.6 M6.7 8.7L5 12.6C4.9 12.9 5.1 13.2 5.4 13.2M6.7 8.7V7.5C6.7 5.4 8.1 4 10 4C10.5 4 10.9 4.1 11.3 4.2" stroke="#6c707e" stroke-width="1" fill="none" /><path d="M8.5 14.6H11.5C11.3 15.4 10.8 15.8 10 15.8S8.7 15.4 8.5 14.6Z" fill="#6c707e"/></svg>
<div class="b" style="left:1934.8000000000002px;top:85.9px;width:11.2px;height:11.2px;background:#e55765;border-radius:50%;"></div>
<svg class="b" style="left:1908px;top:144px;" width="44" height="44" viewBox="0 0 20 20" fill="none" stroke-linecap="round" stroke-linejoin="round"><ellipse cx="10" cy="5.6" rx="5.1" ry="1.9" stroke="#6c707e"/><path d="M4.9 5.6V14.4C4.9 15.5 7.2 16.4 10 16.4S15.1 15.5 15.1 14.4V5.6M4.9 8.5C4.9 9.6 7.2 10.5 10 10.5S15.1 9.6 15.1 8.5M4.9 11.5C4.9 12.6 7.2 13.5 10 13.5S15.1 12.6 15.1 11.5" stroke="#6c707e" stroke-width="1" fill="none" /></svg>
<svg class="b" style="left:76px;top:84px;" width="34" height="34" viewBox="0 0 34 34" fill="none"><circle cx="5.5" cy="5.8" r="1.6" fill="#98d6f8" stroke="#6f8d9c" stroke-width=".5"/><circle cx="23.6" cy="5.5" r="1.5" fill="#98d6f8" stroke="#6f8d9c" stroke-width=".5"/><ellipse cx="3.9" cy="19.7" rx="2" ry="1.4" transform="rotate(-35 3.9 19.7)" fill="#e0a88e" stroke="#8a7466" stroke-width=".4"/><ellipse cx="7" cy="28.3" rx="1.9" ry="1.5" fill="#e0a88e" stroke="#8a7466" stroke-width=".4"/><path d="M14.3 3.1C20 3.1 23.7 6.4 23.7 12V24.5C23.7 27 21.5 28.4 17.5 28.4H11C7.4 28.4 5.4 25.8 4.8 21.2C4.3 17 4.2 14 4.5 11C5 6 8.3 3.1 14.3 3.1Z" fill="#98d6f8" stroke="#6f8d9c" stroke-width=".6"/><circle cx="9.2" cy="10" r="3.2" fill="#fff"/><circle cx="19.3" cy="10" r="3.2" fill="#fff"/><circle cx="8.6" cy="9.6" r="1.6" fill="#000"/><circle cx="19.7" cy="9.6" r="1.6" fill="#000"/><ellipse cx="14.2" cy="13.2" rx="1.5" ry="1" fill="#e0a88e"/><rect x="13.5" y="13.8" width="1.4" height="1.2" fill="#fff"/><ellipse cx="14.2" cy="12.1" rx="1.1" ry=".8" fill="#000"/><path d="M13.1 25.9L20 20.1V31.9ZM22 20.1V31.9L28.9 25.9Z" fill="#e2f6e4" stroke="#e2f6e4" stroke-width="3.2" stroke-linejoin="round"/><path d="M13.1 25.9L20 20.1V31.9Z" fill="#e55765"/><path d="M22 20.1V31.9L28.9 25.9Z" fill="#57a86c"/></svg>
<svg class="b" style="left:285px;top:91px;" width="18" height="18" viewBox="0 0 18 18" fill="none"><path d="M2.5 2.5L15.5 15.5M15.5 2.5L2.5 15.5" stroke="#a0a4b5" stroke-width="1.8" stroke-linecap="round"/></svg>
<div class="b" style="left:1250px;top:88px;width:4px;height:4px;background:#6c707e;border-radius:50%;"></div>
<div class="b" style="left:1250px;top:98px;width:4px;height:4px;background:#6c707e;border-radius:50%;"></div>
<div class="b" style="left:1250px;top:108px;width:4px;height:4px;background:#6c707e;border-radius:50%;"></div>
<svg class="b" style="left:1097.5px;top:145.25px" width="25" height="23.5" viewBox="0 0 28 25"><path d="M11.4 2.3a3 3 0 0 1 5.2 0l10.4 18.2a3 3 0 0 1-2.6 4.5H3.6a3 3 0 0 1-2.6-4.5z" fill="#f2b94f"/><rect x="12.3" y="7" width="3.4" height="9" rx="1.6" fill="#fff"/><circle cx="14" cy="19.8" r="2" fill="#fff"/></svg>
<svg class="b" style="left:1152px;top:144px;" width="28" height="30" viewBox="0 0 28 30" fill="none"><path d="M2.8 12L9.8 18.5L23.7 4.7" stroke="#55a76a" stroke-width="3.8" stroke-linecap="round"/><path d="M2.6 26.9L6.5 23.6L11 26.9L15.4 23.6L19.4 26.9L23.3 23.2" stroke="#55a76a" stroke-width="1.9" stroke-linejoin="round" stroke-linecap="round"/></svg>
<svg class="b" style="left:1215px;top:152.25px" width="18" height="11.5" fill="none" stroke-linecap="round" stroke-linejoin="round"><path d="M2 9.5L9 2L16 9.5" stroke="#6c707e" stroke-width="2"/></svg>
<svg class="b" style="left:1257px;top:152.25px" width="18" height="11.5" fill="none" stroke-linecap="round" stroke-linejoin="round"><path d="M2 2L9 9.5L16 2" stroke="#6c707e" stroke-width="2"/></svg>
<svg class="b" style="left:1330.2px;top:216.2px" width="27.6" height="27.6" viewBox="0 0 28 28"><circle cx="14" cy="14" r="14" fill="#e55765"/><rect x="12.3" y="6.5" width="3.4" height="9.5" rx="1.5" fill="#fff"/><circle cx="14" cy="20" r="2" fill="#fff"/></svg>
<svg class="b" style="left:192px;top:598px;opacity:0.55;" width="34" height="34" viewBox="0 0 34 34" fill="none"><circle cx="5.5" cy="5.8" r="1.6" fill="#98d6f8" stroke="#6f8d9c" stroke-width=".5"/><circle cx="23.6" cy="5.5" r="1.5" fill="#98d6f8" stroke="#6f8d9c" stroke-width=".5"/><ellipse cx="3.9" cy="19.7" rx="2" ry="1.4" transform="rotate(-35 3.9 19.7)" fill="#e0a88e" stroke="#8a7466" stroke-width=".4"/><ellipse cx="7" cy="28.3" rx="1.9" ry="1.5" fill="#e0a88e" stroke="#8a7466" stroke-width=".4"/><path d="M14.3 3.1C20 3.1 23.7 6.4 23.7 12V24.5C23.7 27 21.5 28.4 17.5 28.4H11C7.4 28.4 5.4 25.8 4.8 21.2C4.3 17 4.2 14 4.5 11C5 6 8.3 3.1 14.3 3.1Z" fill="#98d6f8" stroke="#6f8d9c" stroke-width=".6"/><circle cx="9.2" cy="10" r="3.2" fill="#fff"/><circle cx="19.3" cy="10" r="3.2" fill="#fff"/><circle cx="8.6" cy="9.6" r="1.6" fill="#000"/><circle cx="19.7" cy="9.6" r="1.6" fill="#000"/><ellipse cx="14.2" cy="13.2" rx="1.5" ry="1" fill="#e0a88e"/><rect x="13.5" y="13.8" width="1.4" height="1.2" fill="#fff"/><ellipse cx="14.2" cy="12.1" rx="1.1" ry=".8" fill="#000"/><path d="M13.1 25.9L20 20.1V31.9ZM22 20.1V31.9L28.9 25.9Z" fill="#f7f8fa" stroke="#f7f8fa" stroke-width="3.2" stroke-linejoin="round"/><path d="M13.1 25.9L20 20.1V31.9Z" fill="#e55765"/><path d="M22 20.1V31.9L28.9 25.9Z" fill="#57a86c"/></svg>
<svg class="b" style="left:707px;top:607px;" width="18" height="18" viewBox="0 0 18 18" fill="none"><path d="M3 3L15 15M15 3L3 15" stroke="#a8adbd" stroke-width="1.8" stroke-linecap="round"/></svg>
<div class="b" style="left:1800px;top:602px;width:4px;height:4px;background:#6c707e;border-radius:50%;"></div>
<div class="b" style="left:1800px;top:612px;width:4px;height:4px;background:#6c707e;border-radius:50%;"></div>
<div class="b" style="left:1800px;top:622px;width:4px;height:4px;background:#6c707e;border-radius:50%;"></div>
<div class="b" style="left:1842px;top:613px;width:24px;height:2px;background:#6c707e;border-radius:1px;"></div>
<svg class="b" style="left:76px;top:662px;" width="32" height="32" viewBox="0 0 16 16" fill="none" stroke-linecap="round" stroke-linejoin="round"><path d="M6.5 13.5A5.5 5.5 0 1 1 11.9 5.5" stroke="#6c707e" stroke-width="1" fill="none" /><path d="M12.6 1.3V5.5H8.4" stroke="#6c707e" stroke-width="1" fill="none" /><path d="M8.5 9V15L14.5 12Z" stroke="#f7f8fa" stroke-width="3" fill="#f7f8fa"/><path d="M8.6 9.3V14.9a.3.3 0 0 0 .45.26L14 12.36a.3.3 0 0 0 0-.52L9.05 9.04a.3.3 0 0 0-.45.26Z" stroke="#208a3c" stroke-width="1.15" fill="#eef9ef" /></svg>
<svg class="b" style="left:130px;top:662px;" width="32" height="32" viewBox="0 0 16 16" fill="none" stroke-linecap="round" stroke-linejoin="round"><path d="M6.5 13.5A5.5 5.5 0 1 1 11.9 5.5" stroke="#6c707e" stroke-width="1" fill="none" /><path d="M12.6 1.3V5.5H8.4" stroke="#6c707e" stroke-width="1" fill="none" /><circle cx="11.7" cy="11.7" r="4.6" fill="#f7f8fa"/><circle cx="11.7" cy="11.7" r="3.6" fill="#e55765"/><path d="M11.7 9.6V12" stroke="#fff" stroke-width="1.1"/><circle cx="11.7" cy="13.7" r=".6" fill="#fff"/></svg>
<svg class="b" style="left:180px;top:662px;" width="32" height="32" viewBox="0 0 16 16" fill="none" stroke-linecap="round" stroke-linejoin="round"><path d="M6.5 2.5C3.5 3.3 1.9 5.5 1.9 7.9C1.9 10.2 3 12 4.8 13.5" stroke="#6c707e" stroke-width="1" fill="none" /><path d="M1.7 13.6H4.9V10" stroke="#6c707e" stroke-width="1" fill="none" /><path d="M9.4 2.2C11.4 3.4 12.6 5.4 12.6 7.6" stroke="#6c707e" stroke-width="1" fill="none" /><path d="M12.9 2H9.2V5.8" stroke="#6c707e" stroke-width="1" fill="none" /><path d="M8.5 9V15L14.5 12Z" stroke="#f7f8fa" stroke-width="3" fill="#f7f8fa"/><path d="M8.6 9.3V14.9a.3.3 0 0 0 .45.26L14 12.36a.3.3 0 0 0 0-.52L9.05 9.04a.3.3 0 0 0-.45.26Z" stroke="#208a3c" stroke-width="1.15" fill="#eef9ef" /></svg>
<svg class="b" style="left:292px;top:656px;" width="43" height="44" viewBox="0 0 43 44" fill="none"><path d="M10.4 22.3L18 29.9L34 13.9" stroke="#6c707e" stroke-width="2.6" stroke-linejoin="miter" stroke-linecap="butt"/></svg>
<svg class="b" style="left:350px;top:662px;" width="32" height="32" viewBox="0 0 16 16" fill="none" stroke-linecap="round" stroke-linejoin="round"><circle cx="8" cy="8" r="6.4" stroke="#6c707e" stroke-width="1" fill="none"/><path d="M3.6 12.4L12.4 3.6" stroke="#6c707e" stroke-width="1" fill="none" /></svg>
<svg class="b" style="left:414px;top:660px;" width="40" height="40" viewBox="0 0 40 40" fill="none"><g stroke="#6c707e" stroke-width="2" stroke-linecap="round" stroke-linejoin="round" fill="none"><path d="M11 8.3V27.3M4.4 20.7L11 27.3L17.6 20.7M16.5 8.8H31.8M21 18H31.8M24.8 26.7H31.8"/></g><path d="M35.8 29V35.6H28.4Z" fill="#6c707e"/></svg>
<svg class="b" style="left:464px;top:660px;" width="40" height="40" viewBox="0 0 40 40" fill="none"><g stroke="#6c707e" stroke-width="2" stroke-linecap="round" stroke-linejoin="round" fill="none"><path d="M8.8 10V26C8.8 27.7 10 29 11.8 29H27.4M31.6 6.2L19 18.8M19 10.7V18.8H27.2"/></g></svg>
<svg class="b" style="left:516px;top:660px;" width="40" height="40" viewBox="0 0 40 40" fill="none"><g stroke="#6c707e" stroke-width="2" stroke-linecap="round" stroke-linejoin="round" fill="none"><circle cx="20" cy="17.8" r="12.8"/><path d="M20 11.5V17.8L25.4 21"/></g><path d="M38 29V35.6H30.6Z" fill="#6c707e"/></svg>
<div class="b" style="left:599.4px;top:665.6px;width:4.8px;height:4.8px;background:#6c707e;border-radius:50%;"></div>
<div class="b" style="left:599.4px;top:675.6px;width:4.8px;height:4.8px;background:#6c707e;border-radius:50%;"></div>
<div class="b" style="left:599.4px;top:685.4px;width:4.8px;height:4.8px;background:#6c707e;border-radius:50%;"></div>
<svg class="b" style="left:96.2px;top:736.1px" width="19.6" height="11.8" fill="none" stroke-linecap="round" stroke-linejoin="round"><path d="M2 2L9.8 9.8L17.6 2" stroke="#7a7e91" stroke-width="1.9"/></svg>
<svg class="b" style="left:134px;top:728px" width="28" height="28" viewBox="0 0 28 28"><circle cx="14" cy="14" r="14" fill="#e55765"/><rect x="12.3" y="6.5" width="3.4" height="9.5" rx="1.5" fill="#fff"/><circle cx="14" cy="20" r="2" fill="#fff"/></svg>
<svg class="b" style="left:170px;top:774.5px;" width="32" height="24" viewBox="0 0 32 24" fill="none"><path d="M5 12L12 19.3L26.2 4.6" stroke="#55a76a" stroke-width="3.8" stroke-linecap="round" stroke-linejoin="miter"/></svg>
<svg class="b" style="left:170px;top:818.5px;" width="32" height="24" viewBox="0 0 32 24" fill="none"><path d="M5 12L12 19.3L26.2 4.6" stroke="#55a76a" stroke-width="3.8" stroke-linecap="round" stroke-linejoin="miter"/></svg>
<svg class="b" style="left:170px;top:862.5px;" width="32" height="24" viewBox="0 0 32 24" fill="none"><path d="M5 12L12 19.3L26.2 4.6" stroke="#55a76a" stroke-width="3.8" stroke-linecap="round" stroke-linejoin="miter"/></svg>
<svg class="b" style="left:170px;top:906.5px;" width="32" height="24" viewBox="0 0 32 24" fill="none"><path d="M5 12L12 19.3L26.2 4.6" stroke="#55a76a" stroke-width="3.8" stroke-linecap="round" stroke-linejoin="miter"/></svg>
<svg class="b" style="left:170px;top:950.5px;" width="32" height="24" viewBox="0 0 32 24" fill="none"><path d="M5 12L12 19.3L26.2 4.6" stroke="#55a76a" stroke-width="3.8" stroke-linecap="round" stroke-linejoin="miter"/></svg>
<svg class="b" style="left:170px;top:994.5px;" width="32" height="24" viewBox="0 0 32 24" fill="none"><path d="M5 12L12 19.3L26.2 4.6" stroke="#55a76a" stroke-width="3.8" stroke-linecap="round" stroke-linejoin="miter"/></svg>
<svg class="b" style="left:170px;top:1038.5px;" width="32" height="24" viewBox="0 0 32 24" fill="none"><path d="M5 12L12 19.3L26.2 4.6" stroke="#55a76a" stroke-width="3.8" stroke-linecap="round" stroke-linejoin="miter"/></svg>
<svg class="b" style="left:170px;top:1082.5px;" width="32" height="24" viewBox="0 0 32 24" fill="none"><path d="M5 12L12 19.3L26.2 4.6" stroke="#55a76a" stroke-width="3.8" stroke-linecap="round" stroke-linejoin="miter"/></svg>
<svg class="b" style="left:170px;top:1126.5px;" width="32" height="24" viewBox="0 0 32 24" fill="none"><path d="M5 12L12 19.3L26.2 4.6" stroke="#55a76a" stroke-width="3.8" stroke-linecap="round" stroke-linejoin="miter"/></svg>
<svg class="b" style="left:170px;top:1170.5px;" width="32" height="24" viewBox="0 0 32 24" fill="none"><path d="M5 12L12 19.3L26.2 4.6" stroke="#55a76a" stroke-width="3.8" stroke-linecap="round" stroke-linejoin="miter"/></svg>
<svg class="b" style="left:170px;top:1214.5px;" width="32" height="24" viewBox="0 0 32 24" fill="none"><path d="M5 12L12 19.3L26.2 4.6" stroke="#55a76a" stroke-width="3.8" stroke-linecap="round" stroke-linejoin="miter"/></svg>
<svg class="b" style="left:171px;top:1256px;" width="28" height="28" viewBox="0 0 28 28" fill="none"><circle cx="14" cy="14" r="14" fill="#ffaf0f"/><path d="M9 9L19 19M19 9L9 19" stroke="#fff" stroke-width="3" stroke-linecap="round"/></svg>
<svg class="b" style="left:171px;top:1300px;" width="28" height="28" viewBox="0 0 28 28" fill="none"><circle cx="14" cy="14" r="14" fill="#ffaf0f"/><path d="M9 9L19 19M19 9L9 19" stroke="#fff" stroke-width="3" stroke-linecap="round"/></svg>
<svg class="b" style="left:1262px;top:724.5px" width="28" height="25" viewBox="0 0 28 25"><path d="M11.4 2.3a3 3 0 0 1 5.2 0l10.4 18.2a3 3 0 0 1-2.6 4.5H3.6a3 3 0 0 1-2.6-4.5z" fill="#f2a93b"/><rect x="12.3" y="7" width="3.4" height="9" rx="1.6" fill="#fff"/><circle cx="14" cy="19.8" r="2" fill="#fff"/></svg>
<svg class="b" style="left:1844px;top:776px;" width="40" height="40" viewBox="0 0 40 40" fill="none"><g stroke="#6c707e" stroke-width="2" stroke-linecap="round" stroke-linejoin="round"><path d="M20 8.5V31.4M11.4 17.4L20 8.5L28.9 17.4"/></g></svg>
<svg class="b" style="left:1844px;top:828px;" width="40" height="40" viewBox="0 0 40 40" fill="none"><g stroke="#6c707e" stroke-width="2" stroke-linecap="round" stroke-linejoin="round"><path d="M20 8.1V30.8M11.4 22.6L20 30.8L28.9 22.6"/></g></svg>
<svg class="b" style="left:1844px;top:880px;" width="40" height="40" viewBox="0 0 40 40" fill="none"><g stroke="#6c707e" stroke-width="2" stroke-linecap="round" stroke-linejoin="round"><path d="M6.2 10.8H33.6M6.2 19.7H29C31.8 19.7 33.6 21.7 33.6 24.5S31.8 29.3 29 29.3H21.5M6.2 29.3H14.5M25.5 25L21 29.3L25.5 33.6"/></g></svg>
<svg class="b" style="left:1844px;top:931px;" width="40" height="40" viewBox="0 0 40 40" fill="none"><g stroke="#6c707e" stroke-width="2" stroke-linecap="round" stroke-linejoin="round"><path d="M6.2 11.4H15.6M6.2 20.8H12.5M6.2 29.9H33.6M26.6 11.4V25.6M20.7 20.2L26.6 25.8L32.5 20.2"/></g></svg>
<svg class="b" style="left:1844px;top:984px;" width="40" height="40" viewBox="0 0 40 40" fill="none"><g stroke="#6c707e" stroke-width="2" stroke-linejoin="round" fill="none"><path d="M12.5 13.8V8.4H27.7V13.8"/><path d="M12.5 29H9.7C8 29 6.7 27.7 6.7 26V16.8C6.7 15.1 8 13.8 9.7 13.8H30.6C32.3 13.8 33.6 15.1 33.6 16.8V26C33.6 27.7 32.3 29 30.6 29H27.7"/><rect x="12.5" y="23" width="15.2" height="8" /></g><circle cx="28.9" cy="18.5" r="1.2" fill="#6c707e"/></svg>
<svg class="b" style="left:1844px;top:1036px;" width="40" height="40" viewBox="0 0 40 40" fill="none"><g stroke="#6c707e" stroke-width="2" stroke-linecap="round" stroke-linejoin="round" fill="none"><path d="M8.6 12H31.2M15.5 11.5C15.5 9 17 7.2 20 7.2S24.5 9 24.5 11.5M10.9 12.5V29.6C10.9 31.3 12.2 32.6 13.9 32.6H26.6C28.3 32.6 29.6 31.3 29.6 29.6V12.5M17.2 16.7V27.2M23 16.7V27.2"/></g></svg>
<div class="b" style="left:0px;top:1312px;width:1962px;height:2px;background:#ebecf0;"></div>
<div class="b" style="left:0px;top:1314px;width:1962px;height:54px;background:#f7f8fa;"></div>
<span class="t s" style="left:52px;top:1315.5px;height:44px;line-height:44px;font-size:27.5px;color:#6c707e;letter-spacing:-0.484px;">go-metrics</span>
<span class="t s" style="left:266px;top:1315.5px;height:44px;line-height:44px;font-size:27.5px;color:#6c707e;letter-spacing:-1.293px;">ewma_test.go</span>
<span class="t s" style="left:1422px;top:1319px;height:44px;line-height:44px;font-size:27.5px;color:#6c707e;letter-spacing:-1.207px;">55:28</span>
<span class="t s" style="left:1521px;top:1319px;height:44px;line-height:44px;font-size:27.5px;color:#6c707e;">LF</span>
<span class="t s" style="left:1580px;top:1319px;height:44px;line-height:44px;font-size:27.5px;color:#6c707e;letter-spacing:-1.480px;">UTF-8</span>
<span class="t s" style="left:1754px;top:1319px;height:44px;line-height:44px;font-size:27.5px;color:#6c707e;letter-spacing:-0.672px;">Tab</span>
<div class="b" style="left:28px;top:1330px;width:16px;height:16px;background:#e8eefd;border:2px solid #2f6be8;border-radius:4.5px;box-sizing:border-box;"></div>
<svg class="b" style="left:195.5px;top:1329px" width="11" height="18" fill="none" stroke-linecap="round" stroke-linejoin="round"><path d="M2 2L9 9L2 16" stroke="#7a7e91" stroke-width="1.9"/></svg>
<svg class="b" style="left:226px;top:1321px;" width="34" height="34" viewBox="0 0 34 34" fill="none"><circle cx="5.5" cy="5.8" r="1.6" fill="#98d6f8" stroke="#6f8d9c" stroke-width=".5"/><circle cx="23.6" cy="5.5" r="1.5" fill="#98d6f8" stroke="#6f8d9c" stroke-width=".5"/><ellipse cx="3.9" cy="19.7" rx="2" ry="1.4" transform="rotate(-35 3.9 19.7)" fill="#e0a88e" stroke="#8a7466" stroke-width=".4"/><ellipse cx="7" cy="28.3" rx="1.9" ry="1.5" fill="#e0a88e" stroke="#8a7466" stroke-width=".4"/><path d="M14.3 3.1C20 3.1 23.7 6.4 23.7 12V24.5C23.7 27 21.5 28.4 17.5 28.4H11C7.4 28.4 5.4 25.8 4.8 21.2C4.3 17 4.2 14 4.5 11C5 6 8.3 3.1 14.3 3.1Z" fill="#98d6f8" stroke="#6f8d9c" stroke-width=".6"/><circle cx="9.2" cy="10" r="3.2" fill="#fff"/><circle cx="19.3" cy="10" r="3.2" fill="#fff"/><circle cx="8.6" cy="9.6" r="1.6" fill="#000"/><circle cx="19.7" cy="9.6" r="1.6" fill="#000"/><ellipse cx="14.2" cy="13.2" rx="1.5" ry="1" fill="#e0a88e"/><rect x="13.5" y="13.8" width="1.4" height="1.2" fill="#fff"/><ellipse cx="14.2" cy="12.1" rx="1.1" ry=".8" fill="#000"/><path d="M13.1 25.9L20 20.1V31.9ZM22 20.1V31.9L28.9 25.9Z" fill="#f7f8fa" stroke="#f7f8fa" stroke-width="3.2" stroke-linejoin="round"/><path d="M13.1 25.9L20 20.1V31.9Z" fill="#e55765"/><path d="M22 20.1V31.9L28.9 25.9Z" fill="#57a86c"/></svg>
<svg class="b" style="left:1684px;top:1320px;" width="40" height="40" viewBox="0 0 40 40" fill="none"><defs><linearGradient id="jg1" x1="0" y1="1" x2="1" y2="0"><stop offset="0" stop-color="#e8257a"/><stop offset="1" stop-color="#ee4a6a"/></linearGradient><linearGradient id="jg3" x1="0" y1="0" x2="1" y2="1"><stop offset="0" stop-color="#ef5a5a"/><stop offset="1" stop-color="#f4802c"/></linearGradient><linearGradient id="jg2" x1="0" y1="1" x2="1" y2="0"><stop offset="0" stop-color="#fbea2e"/><stop offset="1" stop-color="#f9a62a"/></linearGradient></defs><path d="M16.8 4.5L35 22.6L27 29.5" stroke="url(#jg3)" stroke-width="4" fill="none" stroke-linejoin="miter"/><path d="M1.8 12.6L14.5 2.8L16.8 1.9L20.6 5.6L16.8 8.6L12 12.3V19.5L10.5 19.7L1.8 16.1Z" fill="url(#jg1)"/><path d="M11.5 38L28.5 29" stroke="url(#jg2)" stroke-width="5.5" stroke-linecap="square"/><rect x="12" y="12.2" width="15.8" height="17.6" fill="#0a0a0a"/><rect x="14.3" y="16" width="3.6" height="4" fill="#c9c9c9"/><rect x="18.2" y="18" width="7.4" height="2" fill="#9a9a9a"/><rect x="14.3" y="26.4" width="5.4" height="1.6" fill="#8a8a8a"/></svg>
<svg class="b" style="left:1832px;top:1321px;" width="40" height="40" viewBox="0 0 40 40" fill="none"><g stroke="#6c707e" stroke-width="2.2" stroke-linecap="round" fill="none"><rect x="5.5" y="17.7" width="18.5" height="11.6" rx="3"/><path d="M19.5 17.5V13.5C19.5 10.5 21.5 8.5 24.5 8.5S29.5 10.5 29.5 13.5V14.5"/><path d="M14.8 21.7V25.3"/></g></svg>
<svg class="b" style="left:1890px;top:1321.5px;" width="40" height="40" viewBox="0 0 40 40" fill="none"><g stroke="#6c707e" stroke-width="2.2" stroke-linecap="round" fill="none"><circle cx="20" cy="20" r="13"/><path d="M20 12.8V21.2" stroke-width="3.2"/></g><circle cx="20" cy="27" r="2.1" fill="#6c707e"/></svg>
<div class="b" style="left:580px;top:702px;width:492px;height:376px;background:#fff;box-shadow:0 6px 34px rgba(0,0,0,.17),0 0 0 1.2px rgba(0,0,0,.22);border-radius:16px;"></div>
<span class="t s" style="left:660px;top:718.5px;height:44px;line-height:44px;font-size:27.5px;color:#000;letter-spacing:-0.108px;">Expand All</span>
<span class="t s" style="left:660px;top:762.5px;height:44px;line-height:44px;font-size:27.5px;color:#000;letter-spacing:-0.064px;">Collapse All</span>
<div class="b" style="left:604px;top:814px;width:444px;height:2px;background:#ebecf0;"></div>
<span class="t s" style="left:660px;top:824.5px;height:44px;line-height:44px;font-size:27.5px;color:#a8adbd;letter-spacing:0.099px;">Previous Failed Test</span>
<span class="t s" style="left:660px;top:868.5px;height:44px;line-height:44px;font-size:27.5px;color:#000;letter-spacing:0.289px;">Next Failed Test</span>
<span class="t s" style="left:660px;top:912.5px;height:44px;line-height:44px;font-size:27.5px;color:#000;letter-spacing:0.032px;">Export Test Results...</span>
<div class="b" style="left:604px;top:964px;width:444px;height:2px;background:#ebecf0;"></div>
<div class="b" style="left:604px;top:974px;width:444px;height:44px;background:#d4e2ff;border-radius:8px;"></div>
<span class="t s" style="left:660px;top:974.5px;height:44px;line-height:44px;font-size:27.5px;color:#000;letter-spacing:0.038px;">Test Runner Settings</span>
<span class="t s" style="left:660px;top:1018.5px;height:44px;line-height:44px;font-size:27.5px;color:#000;letter-spacing:-0.009px;">Modify Run Configuration...</span>
<span class="t s" style="left:982px;top:718.5px;height:44px;line-height:44px;font-size:25.4px;color:#818594;letter-spacing:1.781px;-webkit-text-stroke:.45px currentColor;">⌘+</span>
<span class="t s" style="left:988px;top:762.5px;height:44px;line-height:44px;font-size:25.4px;color:#818594;letter-spacing:2.141px;-webkit-text-stroke:.45px currentColor;">⌘-</span>
<span class="t s" style="left:949px;top:825.5px;height:44px;line-height:44px;font-size:22.2px;color:#a8adbd;-webkit-text-stroke:.45px currentColor;">⌥</span>
<span class="t s" style="left:975px;top:824.5px;height:44px;line-height:44px;font-size:25.4px;color:#a8adbd;-webkit-text-stroke:.45px currentColor;">⌘</span>
<svg class="b" style="left:1001.7px;top:836px;" width="20" height="22" viewBox="0 0 20 22" fill="none"><path d="M10 3V20M2.6 10.2L10 3L17.4 10.2" stroke="#a8adbd" stroke-width="2.5" stroke-linecap="round" stroke-linejoin="round"/></svg>
<span class="t s" style="left:949px;top:869.5px;height:44px;line-height:44px;font-size:22.2px;color:#818594;-webkit-text-stroke:.45px currentColor;">⌥</span>
<span class="t s" style="left:975px;top:868.5px;height:44px;line-height:44px;font-size:25.4px;color:#818594;-webkit-text-stroke:.45px currentColor;">⌘</span>
<svg class="b" style="left:1001.7px;top:880px;" width="20" height="22" viewBox="0 0 20 22" fill="none"><path d="M10 2V19M2.6 11.8L10 19L17.4 11.8" stroke="#818594" stroke-width="2.5" stroke-linecap="round" stroke-linejoin="round"/></svg>
<div class="b" style="left:1068px;top:968px;width:598px;height:376px;background:#fff;box-shadow:0 6px 34px rgba(0,0,0,.17),0 0 0 1.2px rgba(0,0,0,.22);border-radius:16px;"></div>
<div class="b" style="left:1092px;top:984px;width:550px;height:44px;background:#d4e2ff;border-radius:8px;"></div>
<span class="t s" style="left:1148px;top:984.5px;height:44px;line-height:44px;font-size:27.5px;color:#000;letter-spacing:0.153px;">Track Running Test</span>
<span class="t s" style="left:1148px;top:1028.5px;height:44px;line-height:44px;font-size:27.5px;color:#000;letter-spacing:0.055px;">Show Inline Statistics</span>
<div class="b" style="left:1092px;top:1080px;width:550px;height:2px;background:#ebecf0;"></div>
<span class="t s" style="left:1148px;top:1090.5px;height:44px;line-height:44px;font-size:27.5px;color:#000;letter-spacing:0.141px;">Scroll to Stack Trace</span>
<span class="t s" style="left:1148px;top:1134.5px;height:44px;line-height:44px;font-size:27.5px;color:#000;letter-spacing:-0.045px;">Open Source at Exception</span>
<span class="t s" style="left:1148px;top:1178.5px;height:44px;line-height:44px;font-size:27.5px;color:#000;letter-spacing:0.104px;">Navigate with Single Click</span>
<span class="t s" style="left:1148px;top:1222.5px;height:44px;line-height:44px;font-size:27.5px;color:#000;letter-spacing:0.273px;">Set AutoTest Delay</span>
<div class="b" style="left:1092px;top:1274px;width:550px;height:2px;background:#ebecf0;"></div>
<span class="t s" style="left:1148px;top:1284.5px;height:44px;line-height:44px;font-size:27.5px;color:#000;letter-spacing:-0.019px;">Select First Failed Test When Finished</span>
<svg class="b" style="left:616px;top:827px;" width="40" height="40" viewBox="0 0 40 40" fill="none"><g stroke="#a8adbd" stroke-width="2" stroke-linecap="round" stroke-linejoin="round"><path d="M20 8.5V31.4M11.4 17.4L20 8.5L28.9 17.4"/></g></svg>
<svg class="b" style="left:616px;top:871px;" width="40" height="40" viewBox="0 0 40 40" fill="none"><g stroke="#6c707e" stroke-width="2" stroke-linecap="round" stroke-linejoin="round"><path d="M20 8.1V30.8M11.4 22.6L20 30.8L28.9 22.6"/></g></svg>
<svg class="b" style="left:616px;top:915px;" width="40" height="40" viewBox="0 0 40 40" fill="none"><g stroke="#6c707e" stroke-width="2" stroke-linecap="round" stroke-linejoin="round" fill="none"><path d="M8.5 16V29C8.5 30.5 9.5 31.5 11 31.5H26M18.5 21.5L31.5 8.5M22.5 8.5H31.5V17.5"/></g></svg>
<svg class="b" style="left:616.0px;top:976.0px;" width="40" height="40" viewBox="0 0 40 40" fill="none"><path d="M30.10 20.00 L30.10 20.44 L30.12 20.89 L30.18 21.34 L30.33 21.82 L30.65 22.36 L31.11 22.98 L31.54 23.64 L31.75 24.28 L31.76 24.87 L31.64 25.43 L31.43 25.95 L31.17 26.45 L30.87 26.92 L30.52 27.36 L30.10 27.75 L29.58 28.04 L28.92 28.17 L28.13 28.13 L27.37 28.04 L26.74 28.04 L26.25 28.15 L25.83 28.32 L25.43 28.53 L25.05 28.75 L24.67 28.97 L24.29 29.21 L23.93 29.49 L23.59 29.86 L23.28 30.40 L22.98 31.11 L22.62 31.81 L22.17 32.32 L21.66 32.62 L21.12 32.79 L20.56 32.87 L20.00 32.90 L19.44 32.87 L18.88 32.79 L18.34 32.62 L17.83 32.32 L17.38 31.81 L17.02 31.11 L16.72 30.40 L16.41 29.86 L16.07 29.49 L15.71 29.21 L15.33 28.97 L14.95 28.75 L14.57 28.53 L14.17 28.32 L13.75 28.15 L13.26 28.04 L12.63 28.04 L11.87 28.13 L11.08 28.17 L10.42 28.04 L9.90 27.75 L9.48 27.36 L9.13 26.92 L8.83 26.45 L8.57 25.95 L8.36 25.43 L8.24 24.87 L8.25 24.28 L8.46 23.64 L8.89 22.98 L9.35 22.36 L9.67 21.82 L9.82 21.34 L9.88 20.89 L9.90 20.44 L9.90 20.00 L9.90 19.56 L9.88 19.11 L9.82 18.66 L9.67 18.18 L9.35 17.64 L8.89 17.02 L8.46 16.36 L8.25 15.72 L8.24 15.13 L8.36 14.57 L8.57 14.05 L8.83 13.55 L9.13 13.08 L9.48 12.64 L9.90 12.25 L10.42 11.96 L11.08 11.83 L11.87 11.87 L12.63 11.96 L13.26 11.96 L13.75 11.85 L14.17 11.68 L14.57 11.47 L14.95 11.25 L15.33 11.03 L15.71 10.79 L16.07 10.51 L16.41 10.14 L16.72 9.60 L17.02 8.89 L17.38 8.19 L17.83 7.68 L18.34 7.38 L18.88 7.21 L19.44 7.13 L20.00 7.10 L20.56 7.13 L21.12 7.21 L21.66 7.38 L22.17 7.68 L22.62 8.19 L22.98 8.89 L23.28 9.60 L23.59 10.14 L23.93 10.51 L24.29 10.79 L24.67 11.03 L25.05 11.25 L25.43 11.47 L25.83 11.68 L26.25 11.85 L26.74 11.96 L27.37 11.96 L28.13 11.87 L28.92 11.83 L29.58 11.96 L30.10 12.25 L30.52 12.64 L30.87 13.08 L31.17 13.55 L31.43 14.05 L31.64 14.57 L31.76 15.13 L31.75 15.72 L31.54 16.36 L31.11 17.02 L30.65 17.64 L30.33 18.18 L30.18 18.66 L30.12 19.11 L30.10 19.56Z" stroke="#6c707e" stroke-width="2" stroke-linejoin="round"/><circle cx="20.0" cy="20.0" r="3.9" stroke="#6c707e" stroke-width="2"/></svg>
<svg class="b" style="left:1025.75px;top:988.5px" width="10.5" height="17" fill="none" stroke-linecap="round" stroke-linejoin="round"><path d="M2 2L8.5 8.5L2 15" stroke="#7a7e91" stroke-width="1.9"/></svg>
<svg class="b" style="left:1619.75px;top:1236.5px" width="10.5" height="17" fill="none" stroke-linecap="round" stroke-linejoin="round"><path d="M2 2L8.5 8.5L2 15" stroke="#7a7e91" stroke-width="1.9"/></svg>
<svg class="b" style="left:1108px;top:991px;" width="34" height="32" viewBox="0 0 34 32" fill="none"><path d="M7.2 17.4L12.8 23.6L24.9 6.2" stroke="#3d3e43" stroke-width="3.7" stroke-linecap="round" stroke-linejoin="round"/></svg>
<svg class="b" style="left:1108px;top:1035px;" width="34" height="32" viewBox="0 0 34 32" fill="none"><path d="M7.2 17.4L12.8 23.6L24.9 6.2" stroke="#3d3e43" stroke-width="3.7" stroke-linecap="round" stroke-linejoin="round"/></svg>
<svg class="b" style="left:1108px;top:1141px;" width="34" height="32" viewBox="0 0 34 32" fill="none"><path d="M7.2 17.4L12.8 23.6L24.9 6.2" stroke="#3d3e43" stroke-width="3.7" stroke-linecap="round" stroke-linejoin="round"/></svg>
</div>
</body></html>
